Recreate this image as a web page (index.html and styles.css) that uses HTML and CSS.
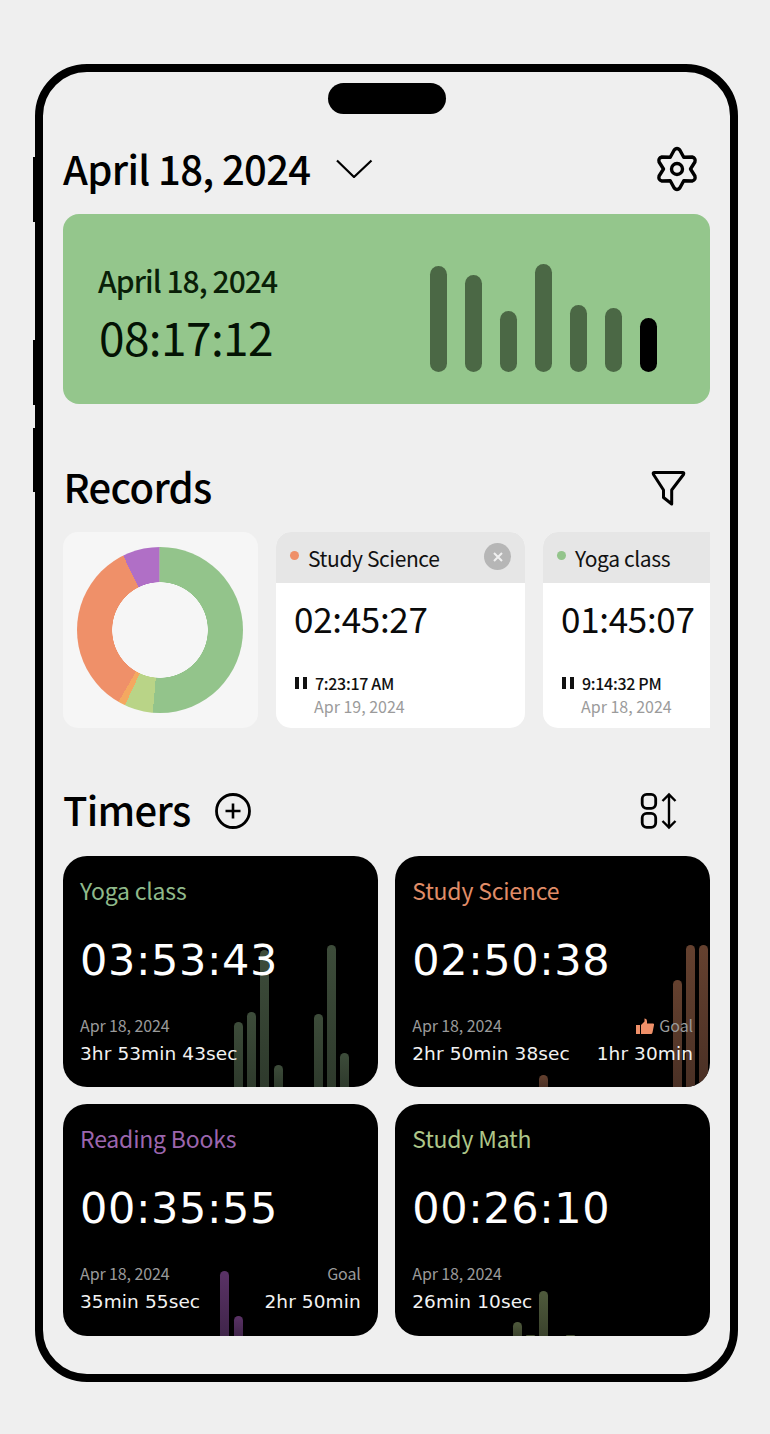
FILE: index.html
```html
<!DOCTYPE html>
<html lang="en">
<head>
<meta charset="utf-8">
<title>Timers</title>
<link rel="stylesheet" href="styles.css">
</head>
<body>
<main class="phone">
  <span class="side-btn side-btn-1"></span>
  <span class="side-btn side-btn-2"></span>
  <span class="side-btn side-btn-3"></span>
  <div class="notch"></div>

  <header class="top-row">
    <div class="date-picker">
      <h1 class="date-title">April 18, 2024</h1>
      <svg class="chevron" width="37" height="19" viewBox="0 0 37 19"><path d="M1 1.5 18 18 35.5 1.5" fill="none" stroke="#000" stroke-width="2.2"/></svg>
    </div>
    <svg class="gear" width="44" height="48" viewBox="-22 -24 44 48"><path d="M-6.750 -11.700 L-2.800 -19 Q0 -22 2.800 -19 L6.750 -11.700 L15.100 -12 Q19 -11 17.900 -7 L13.500 0 L17.900 7 Q19 11 15.100 12 L6.750 11.700 L2.800 19 Q0 22 -2.800 19 L-6.750 11.700 L-15.100 12 Q-19 11 -17.900 7 L-13.500 0 L-17.900 -7 Q-19 -11 -15.100 -12 Z" fill="none" stroke="#000" stroke-width="3.400" stroke-linejoin="round"/><circle r="5.5" fill="none" stroke="#000" stroke-width="3.400"/></svg>
  </header>

  <section class="hero">
    <div class="hero-text">
      <div class="hero-date">April 18, 2024</div>
      <div class="hero-time">08:17:12</div>
    </div>
    <div class="hero-bars">
      <span class="hero-bar" style="height:106px"></span>
      <span class="hero-bar" style="height:97px"></span>
      <span class="hero-bar" style="height:61px"></span>
      <span class="hero-bar" style="height:108px"></span>
      <span class="hero-bar" style="height:67px"></span>
      <span class="hero-bar" style="height:64px"></span>
      <span class="hero-bar hero-bar-now" style="height:54px"></span>
    </div>
  </section>

  <div class="section-head section-head-records">
    <h2 class="section-title">Records</h2>
    <svg class="filter-icon" width="38" height="38" viewBox="0 0 38 38"><path d="M4.500 3.5 H32.500 Q34.500 3.5 33.500 5.500 L21.700 21 V35 L13.500 28.500 V21 L3.500 5.500 Q2.500 3.500 4.500 3.500 Z" fill="none" stroke="#000" stroke-width="3" stroke-linejoin="round"/></svg>
  </div>

  <section class="records">
    <div class="donut-card"><div class="donut"></div></div>

    <article class="record">
      <div class="record-head">
        <span class="dot dot-orange"></span>
        <span class="record-name">Study Science</span>
        <span class="close">
          <svg width="12" height="12" viewBox="0 0 12 12"><path d="M2 2 10 10M10 2 2 10" stroke="#f0f0f0" stroke-width="2"/></svg>
        </span>
      </div>
      <div class="record-body">
        <div class="record-time">02:45:27</div>
        <div class="record-stop"><span class="pause"></span>7:23:17 AM</div>
        <div class="record-date">Apr 19, 2024</div>
      </div>
    </article>

    <article class="record">
      <div class="record-head">
        <span class="dot dot-green"></span>
        <span class="record-name">Yoga class</span>
      </div>
      <div class="record-body">
        <div class="record-time">01:45:07</div>
        <div class="record-stop"><span class="pause"></span>9:14:32 PM</div>
        <div class="record-date">Apr 18, 2024</div>
      </div>
    </article>
  </section>

  <div class="section-head section-head-timers">
    <div class="timers-title">
      <h2 class="section-title">Timers</h2>
      <svg class="plus-icon" width="38" height="38" viewBox="0 0 38 38"><circle cx="19" cy="19" r="16.500" fill="none" stroke="#000" stroke-width="2.800"/><path d="M19 11.500V26.500M11.500 19H26.500" stroke="#000" stroke-width="2.600"/></svg>
    </div>
    <svg class="sort-icon" width="40" height="38" viewBox="0 0 40 38"><rect x="2.200" y="2.300" width="13.500" height="14" rx="4.500" fill="none" stroke="#000" stroke-width="2.800"/><rect x="2.200" y="21.300" width="13.500" height="14" rx="4.500" fill="none" stroke="#000" stroke-width="2.800"/><path d="M29 3V35M22.500 9 29 2.500 35.500 9M22.500 29 29 35.500 35.500 29" fill="none" stroke="#000" stroke-width="2.400"/></svg>
  </div>

  <section class="timers">
    <article class="timer">
      <div class="bars bars-green">
        <span style="height:65px"></span><span style="height:75px"></span><span style="height:137px"></span><span style="height:22px"></span><span></span><span></span><span style="height:73px"></span><span style="height:142px"></span><span style="height:34px"></span><span></span><span></span>
      </div>
      <div class="timer-name name-green">Yoga class</div>
      <div class="timer-clock">03:53:43</div>
      <div class="timer-foot">
        <div>
          <div class="timer-date">Apr 18, 2024</div>
          <div class="timer-total">3hr 53min 43sec</div>
        </div>
      </div>
    </article>

    <article class="timer">
      <div class="bars bars-orange">
        <span style="height:12px"></span><span></span><span></span><span></span><span></span><span></span><span></span><span></span><span></span><span></span><span style="height:107px"></span><span style="height:142px"></span><span style="height:142px"></span>
      </div>
      <div class="timer-name name-orange">Study Science</div>
      <div class="timer-clock">02:50:38</div>
      <div class="timer-foot">
        <div>
          <div class="timer-date">Apr 18, 2024</div>
          <div class="timer-total">2hr 50min 38sec</div>
        </div>
        <div class="timer-goal">
          <div class="timer-date">
            <svg class="thumb" width="18" height="16" viewBox="0 0 18 16"><path d="M0 7H4V16H0ZM5 7 8.500 3.500V0.500Q11 0.300 11 3V5.500H17Q18.300 5.500 18 7L16.500 14.500Q16.200 16 15 16H5Z" fill="#ef9069"/></svg>
            Goal
          </div>
          <div class="timer-total">1hr 30min</div>
        </div>
      </div>
    </article>

    <article class="timer">
      <div class="bars bars-purple">
        <span style="height:65px"></span><span style="height:20px"></span><span></span><span></span><span></span><span></span><span></span><span></span><span></span><span></span><span></span><span></span>
      </div>
      <div class="timer-name name-purple">Reading Books</div>
      <div class="timer-clock">00:35:55</div>
      <div class="timer-foot">
        <div>
          <div class="timer-date">Apr 18, 2024</div>
          <div class="timer-total">35min 55sec</div>
        </div>
        <div class="timer-goal">
          <div class="timer-date">Goal</div>
          <div class="timer-total">2hr 50min</div>
        </div>
      </div>
    </article>

    <article class="timer">
      <div class="bars bars-lime">
        <span style="height:14px"></span><span style="height:1px"></span><span style="height:45px"></span><span></span><span style="height:1px"></span><span></span><span></span><span></span><span></span><span></span><span></span><span></span><span></span><span></span><span></span>
      </div>
      <div class="timer-name name-lime">Study Math</div>
      <div class="timer-clock">00:26:10</div>
      <div class="timer-foot">
        <div>
          <div class="timer-date">Apr 18, 2024</div>
          <div class="timer-total">26min 10sec</div>
        </div>
      </div>
    </article>
  </section>
</main>
</body>
</html>
```
FILE: styles.css
```css
* { box-sizing: border-box; }
html, body { margin: 0; padding: 0; }
body {
  background: #efefef;
  color: #000;
  font-family: "Noto Sans CJK KR", "Noto Sans", sans-serif;
  height: 1434px;
  overflow: hidden;
}
h1, h2 { margin: 0; font-weight: 500; }

.phone {
  position: relative;
  width: 703px;
  height: 1318px;
  margin: 64px 0 0 35px;
  padding: 11px 20px 0;
  border: 8px solid #000;
  border-radius: 52px;
}
.side-btn { position: absolute; left: -10px; width: 2px; background: #000; }
.side-btn-1 { top: 85px; height: 65px; }
.side-btn-2 { top: 268px; height: 65px; }
.side-btn-3 { top: 356px; height: 64px; }

.notch {
  width: 118px;
  height: 31px;
  margin: 0 auto;
  background: #000;
  border-radius: 16px;
}

.top-row, .section-head {
  display: flex;
  align-items: center;
  justify-content: space-between;
  height: 48px;
}
.top-row { margin: 32px 0 20px; }
.date-picker { display: flex; align-items: center; gap: 25px; }
.date-title { font-size: 40px; line-height: 48px; letter-spacing: -0.65px; white-space: nowrap; transform: translateY(-2px); }
.chevron { margin-top: -3px; }
.gear { margin-right: 11px; margin-top: -2px; }

.hero {
  display: flex;
  justify-content: space-between;
  align-items: flex-end;
  height: 190px;
  padding: 0 52.700px 32px 35px;
  background: #94c68c;
  border-radius: 16px;
}
.hero-text { align-self: flex-start; padding-top: 46px; }
.hero-date { font-size: 30px; line-height: 40px; font-weight: 500; letter-spacing: -0.95px; color: #0a1f08; }
.hero-time { margin-top: 7px; margin-left: 1px; font-size: 46px; line-height: 58px; font-weight: 400; letter-spacing: -0.6px; color: #041204; }
.hero-bars { display: flex; align-items: flex-end; gap: 17.400px; }
.hero-bar { width: 17.600px; background: #4b6845; border-radius: 9px; }
.hero-bar-now { background: #000; }

.section-head-records { margin: 60px 0 20px; padding-right: 22px; }
.section-head-timers { margin: 59px 0 21px; padding-right: 30px; }
.section-title { font-size: 40px; line-height: 48px; letter-spacing: -0.7px; transform: translateY(-2px); }
.section-head-records .section-title { margin-left: 0.5px; }
.timers-title { display: flex; align-items: center; gap: 24px; }

.records { display: flex; gap: 18px; height: 196px; overflow: hidden; }
.donut-card {
  flex: none;
  display: flex;
  align-items: center;
  justify-content: center;
  width: 195px;
  background: #f6f6f6;
  border-radius: 15px;
}
.donut {
  width: 166px;
  height: 166px;
  margin-left: -1px;
  border-radius: 50%;
  background:
    radial-gradient(circle, #f6f6f6 47.500px, transparent 48px),
    conic-gradient(#93c48b 0 185deg, #b9d487 185deg 205deg, #f4a860 205deg 210deg, #ef9069 210deg 333.600deg, #b06fc6 333.600deg 359deg, #a9a9a9 359deg);
}
.record {
  flex: none;
  width: 249px;
  background: #fff;
  border-radius: 15px;
  overflow: hidden;
}
.record-head {
  display: flex;
  align-items: center;
  height: 51px;
  padding: 0 14px;
  background: #e6e6e6;
}
.dot { width: 9px; height: 9px; border-radius: 50%; margin-right: 9px; margin-top: -4px; }
.dot-orange { background: #ef9069; }
.dot-green { background: #93c48b; }
.record-name { font-size: 21px; line-height: 28px; letter-spacing: -0.4px; color: #111; }
.close {
  display: flex;
  align-items: center;
  justify-content: center;
  width: 27px;
  height: 27px;
  margin: -2px 0 0 auto;
  background: #b6b6b6;
  border-radius: 50%;
}
.record-body { padding: 13px 18px 0; }
.record-time { font-size: 35px; line-height: 44px; letter-spacing: -0.3px; color: #0a0a0a; }
.record-stop {
  display: flex;
  align-items: center;
  gap: 8px;
  margin-top: 32px;
  font-size: 16px;
  line-height: 22px;
  font-weight: 500;
  letter-spacing: -0.3px;
  color: #111;
}
.pause {
  width: 12px;
  height: 12px;
  border-left: 4.500px solid #111;
  border-right: 4.500px solid #111;
  margin-left: 1px;
}
.record-date { margin: 1px 0 0 20px; font-size: 16px; line-height: 22px; color: #9b9b9b; }

.timers {
  display: grid;
  grid-template-columns: 1fr 1fr;
  grid-template-rows: 231px 232px;
  gap: 17px 17.500px;
}
.timer {
  position: relative;
  padding: 19px 17px 0;
  background: #000;
  border-radius: 24px;
  overflow: hidden;
  color: #fff;
}
.bars {
  position: absolute;
  right: 1.700px;
  bottom: 0;
  display: flex;
  align-items: flex-end;
  gap: 4.330px;
}
.bars span {
  width: 9px;
  height: 0;
  border-radius: 5px 5px 0 0;
}
.bars-green span { background: linear-gradient(#3d4c3a, #2e3a2c); }
.bars-orange span { background: linear-gradient(#65412f, #4a3025); }
.bars-purple span { background: linear-gradient(#5a3266, #40254a); }
.bars-lime span { background: linear-gradient(#4f5a3c, #3a422c); }

.timer-name, .timer-clock, .timer-foot { position: relative; }
.timer-name { font-size: 23px; line-height: 30px; letter-spacing: -0.2px; }
.name-green { color: #8fb98a; }
.name-orange { color: #e08d68; }
.name-purple { color: #9c66ae; }
.name-lime { color: #aec688; }
.timer-clock {
  margin-top: 28px;
  font-family: "DejaVu Sans", sans-serif;
  font-size: 43px;
  line-height: 54px;
  font-weight: 400;
  letter-spacing: 0.6px;
}
.timer-foot {
  display: flex;
  justify-content: space-between;
  margin-top: 26px;
}
.timer-goal { text-align: right; }
.timer-date { font-size: 16px; line-height: 24px; color: #9a9a9a; letter-spacing: -0.1px; }
.timer-total {
  margin-top: 5px;
  font-family: "DejaVu Sans", sans-serif;
  font-size: 18.500px;
  line-height: 24px;
  letter-spacing: 0.1px;
  white-space: nowrap;
  color: #f2f2f2;
}
.thumb { vertical-align: -2px; margin-right: 2px; }
```
